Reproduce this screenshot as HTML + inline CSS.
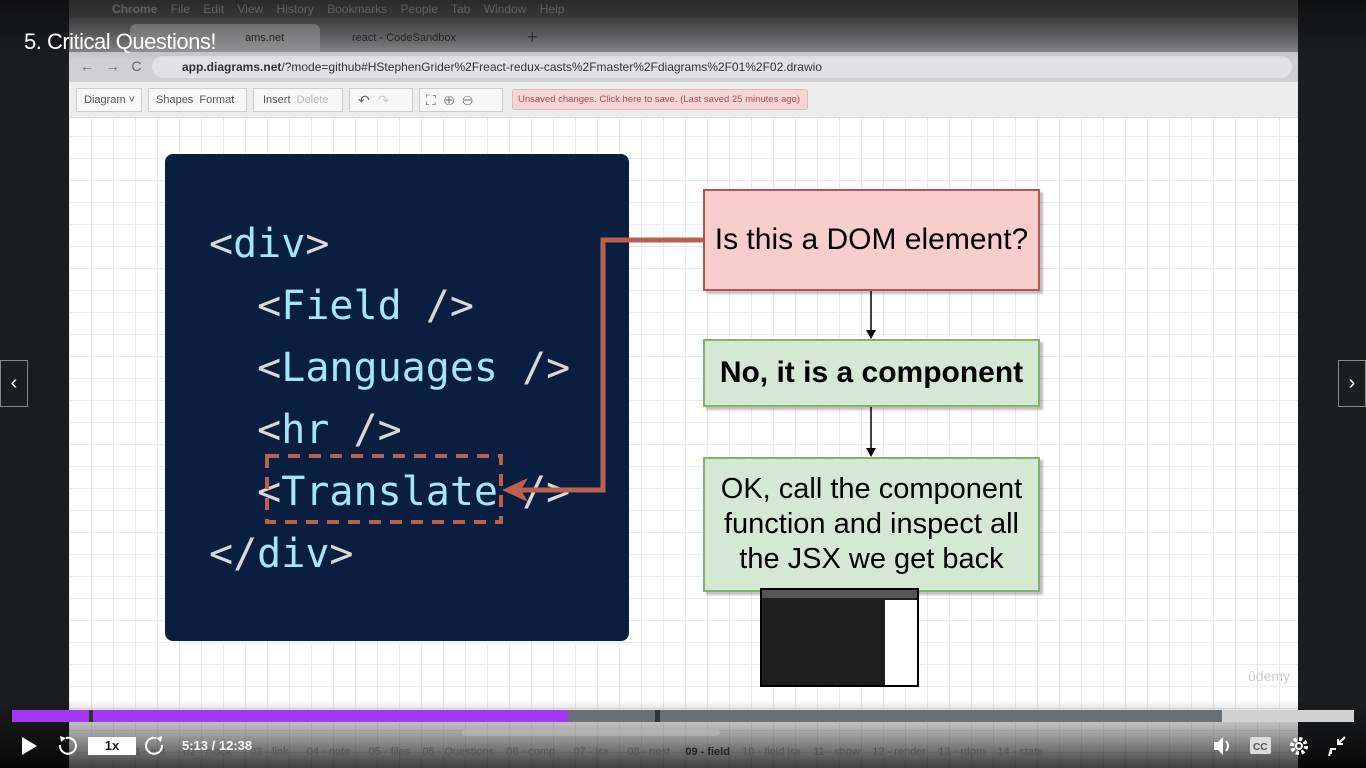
<!DOCTYPE html>
<html><head><style>
*{margin:0;padding:0;box-sizing:border-box}
body{width:1366px;height:768px;overflow:hidden;background:#1c1d1f;font-family:"Liberation Sans",sans-serif;position:relative}
.abs{position:absolute}
#content{left:69px;top:0;width:1229px;height:768px;background-color:#fff;
background-image:linear-gradient(#ececec 1px,transparent 1px),linear-gradient(90deg,#ececec 1px,transparent 1px);background-size:22px 22px;background-position:0 4px}
.code{font-family:"DejaVu Sans Mono","Liberation Mono",monospace;font-size:40px;color:#a5e6f5;white-space:pre;line-height:62px}
.code b{font-weight:normal;color:#d8d8d8}
.box{position:absolute;display:flex;align-items:center;justify-content:center;text-align:center;font-size:30px;color:#000;box-shadow:3px 3px 2px rgba(0,0,0,.25);white-space:nowrap}
</style></head><body>
<div id="content" class="abs"></div>
<!-- top chrome -->
<div class="abs" style="left:69px;top:0;width:1229px;height:18px;background:#4e4e50"></div>
<div class="abs" style="left:69px;top:18px;width:1229px;height:34px;background:linear-gradient(#5a5a5c,#8a8a8c)"></div>
<div class="abs" style="left:130px;top:24px;width:190px;height:28px;background:#9a9a9c;border-radius:6px 6px 0 0"></div>
<div class="abs" style="left:69px;top:52px;width:1229px;height:30px;background:#cfcfd1"></div>
<div class="abs" style="left:152px;top:56px;width:1140px;height:22px;background:#e2e2e4;border-radius:11px"></div>
<div class="abs" style="left:69px;top:82px;width:1229px;height:36px;background:#ececec;border-bottom:1px solid #ddd"></div>
<div class="abs" style="left:112px;top:2px;font-size:12px;color:#9a9a9c;white-space:pre"><b>Chrome</b>    File    Edit    View    History    Bookmarks    People    Tab    Window    Help</div>
<div class="abs" style="left:352px;top:32px;font-size:11px;color:#2a2a2a">react - CodeSandbox</div>
<div class="abs" style="left:245px;top:32px;font-size:11px;color:#2a2a2a">ams.net</div>
<div class="abs" style="left:527px;top:27px;font-size:18px;color:#333">+</div>
<div class="abs" style="left:182px;top:60px;font-size:12px;color:#333"><b>app.diagrams.net</b>/?mode=github#HStephenGrider%2Freact-redux-casts%2Fmaster%2Fdiagrams%2F01%2F02.drawio</div>
<div class="abs" style="left:80px;top:58px;font-size:14px;color:#666;white-space:pre">←   →   C</div>
<div class="abs" style="left:76px;top:88px;width:66px;height:24px;border:1px solid #ccc;background:#f7f7f7;font-size:11px;color:#555;padding:5px 7px;white-space:nowrap">Diagram ˅</div>
<div class="abs" style="left:148px;top:88px;width:99px;height:24px;border:1px solid #ccc;background:#f7f7f7;font-size:11px;color:#555;padding:5px 7px;white-space:nowrap">Shapes &nbsp;Format</div>
<div class="abs" style="left:253px;top:88px;width:90px;height:24px;border:1px solid #ccc;background:#f7f7f7;font-size:11px;color:#555;padding:5px 9px;white-space:nowrap">Insert &nbsp;<span style="color:#bbb">Delete</span></div>
<div class="abs" style="left:349px;top:88px;width:64px;height:24px;border:1px solid #ccc;background:#f7f7f7;font-size:14px;color:#666;padding:3px 8px">↶ &nbsp;<span style="color:#ccc">↷</span></div>
<div class="abs" style="left:419px;top:88px;width:84px;height:24px;border:1px solid #ccc;background:#f7f7f7;font-size:14px;color:#666;padding:3px 6px">⛶ &nbsp;⊕ &nbsp;⊖</div>
<div class="abs" style="left:512px;top:89px;width:296px;height:21px;background:#f4d6d6;border:1px solid #e6b8b8;border-radius:3px;font-size:9.5px;color:#b24a4a;padding:4px 5px;white-space:nowrap">Unsaved changes. Click here to save. (Last saved 25 minutes ago)</div>
<div class="abs" style="left:0;top:0;width:1366px;height:60px;background:linear-gradient(rgba(0,0,0,.45),rgba(0,0,0,0))"></div>
<div class="abs" style="left:24px;top:29px;font-size:22px;color:#fff;letter-spacing:-0.5px">5. Critical Questions!</div>

<!-- code box -->
<div class="abs" style="left:165px;top:154px;width:464px;height:487px;background:#0a1f3f;border-radius:8px"></div>
<div class="abs code" style="left:209px;top:213px"><b>&lt;</b>div<b>&gt;</b>
  <b>&lt;</b>Field <b>/&gt;</b>
  <b>&lt;</b>Languages <b>/&gt;</b>
  <b>&lt;</b>hr <b>/&gt;</b>
  <b>&lt;</b>Translate <b>/&gt;</b>
<b>&lt;/</b>div<b>&gt;</b></div>
<svg class="abs" style="left:0;top:0" width="1366" height="768">
<rect x="267" y="456" width="234" height="66" fill="none" stroke="#b9604f" stroke-width="4" stroke-dasharray="12,9"/>
<polyline points="703,240 603,240 603,490 515,490" fill="none" stroke="#b9604f" stroke-width="5"/>
<polygon points="502,490 528,478 521,490 528,502" fill="#b9604f"/>
<line x1="871" y1="291" x2="871" y2="332" stroke="#000" stroke-width="1.5"/>
<polygon points="866,330 876,330 871,339" fill="#000"/>
<line x1="871" y1="407" x2="871" y2="450" stroke="#000" stroke-width="1.5"/>
<polygon points="866,448 876,448 871,457" fill="#000"/>
</svg>
<div class="box" style="left:703px;top:189px;width:337px;height:102px;background:#f8cecc;border:2px solid #b85450">Is this a DOM element?</div>
<div class="box" style="left:703px;top:339px;width:337px;height:68px;background:#d5e8d4;border:2px solid #82b366;font-weight:bold">No, it is a component</div>
<div class="box" style="left:703px;top:457px;width:337px;height:135px;background:#d5e8d4;border:2px solid #82b366;line-height:35px;font-size:29px">OK, call the component<br>function and inspect all<br>the JSX we get back</div>
<div class="abs" style="left:760px;top:588px;width:159px;height:99px;background:#1e1e1e;border:2px solid #000"></div>
<div class="abs" style="left:885px;top:600px;width:32px;height:85px;background:#fff"></div>
<div class="abs" style="left:762px;top:590px;width:155px;height:8px;background:#555"></div>
<div class="abs" style="left:1248px;top:668px;font-size:14px;color:#ccc">ûdemy</div>

<!-- nav -->
<div class="abs" style="left:0;top:360px;width:28px;height:47px;background:#1c1d1f;border:1px solid #888;color:#fff;font-size:20px;text-align:center;line-height:44px">‹</div>
<div class="abs" style="left:1338px;top:360px;width:28px;height:47px;background:#1c1d1f;border:1px solid #888;color:#fff;font-size:20px;text-align:center;line-height:44px">›</div>

<!-- bottom -->
<div class="abs" style="left:0;top:700px;width:1366px;height:68px;background:linear-gradient(rgba(0,0,0,0),rgba(0,0,0,.75))"></div>
<div class="abs" style="left:69px;top:738px;width:1229px;height:30px;font-size:11px;color:#555;white-space:pre;padding:8px 0 0 60px">01 - init      02 - mock      03 - link      04 - note      05 - files    05 - Questions    06 - comp      07 - jsx      08 - nest     <b style="color:#222">09 - field</b>    10 - field jsx    11 - show    12 - render    13 - rdom    14 - state</div>
<div class="abs" style="left:12px;top:710px;width:556px;height:12px;background:#a435f0"></div>
<div class="abs" style="left:568px;top:710px;width:654px;height:12px;background:#6a6f73"></div>
<div class="abs" style="left:1222px;top:710px;width:132px;height:12px;background:#d1d1d1"></div>
<div class="abs" style="left:89px;top:710px;width:4px;height:12px;background:#333"></div>
<div class="abs" style="left:655px;top:710px;width:5px;height:12px;background:#333"></div>
<div class="abs" style="left:462px;top:729px;width:258px;height:7px;background:#bbb;border-radius:4px;opacity:.6"></div>
<svg class="abs" style="left:0;top:728px" width="1366" height="36">
<polygon points="22,9 22,27 37,18" fill="#fff"/>
<path d="M66 10 A8 8 0 1 1 60 17" fill="none" stroke="#fff" stroke-width="2"/>
<polygon points="60,8 66,10 61,14" fill="#fff"/>
<path d="M156 10 A8 8 0 1 0 162 17" fill="none" stroke="#fff" stroke-width="2"/>
<polygon points="162,8 156,10 161,14" fill="#fff"/>
<polygon points="1214,14 1218,14 1223,9 1223,27 1218,22 1214,22" fill="#fff"/>
<path d="M1226 13 Q1230 18 1226 23" stroke="#fff" fill="none" stroke-width="2"/>
<rect x="1250" y="9" width="21" height="17" rx="2" fill="#ddd"/>
<text x="1253" y="22" font-size="10" font-family="Liberation Sans" font-weight="bold" fill="#555">CC</text>
<circle cx="1299" cy="18" r="7" fill="none" stroke="#fff" stroke-width="4" stroke-dasharray="3,2.5"/>
<circle cx="1299" cy="18" r="4" fill="#fff"/><circle cx="1299" cy="18" r="2" fill="#333"/>
<path d="M1338 11 L1338 16 L1343 16 M1338 16 L1345 9 M1336 21 L1331 21 L1331 26 M1331 21 L1329 28" stroke="#fff" stroke-width="2" fill="none"/>
</svg>
<div class="abs" style="left:88px;top:737px;width:48px;height:18px;background:#fff;color:#1c1d1f;font-size:13px;font-weight:bold;text-align:center;line-height:18px">1x</div>
<div class="abs" style="left:182px;top:738px;color:#fff;font-size:13px;font-weight:bold">5:13 / 12:38</div>
</body></html>
